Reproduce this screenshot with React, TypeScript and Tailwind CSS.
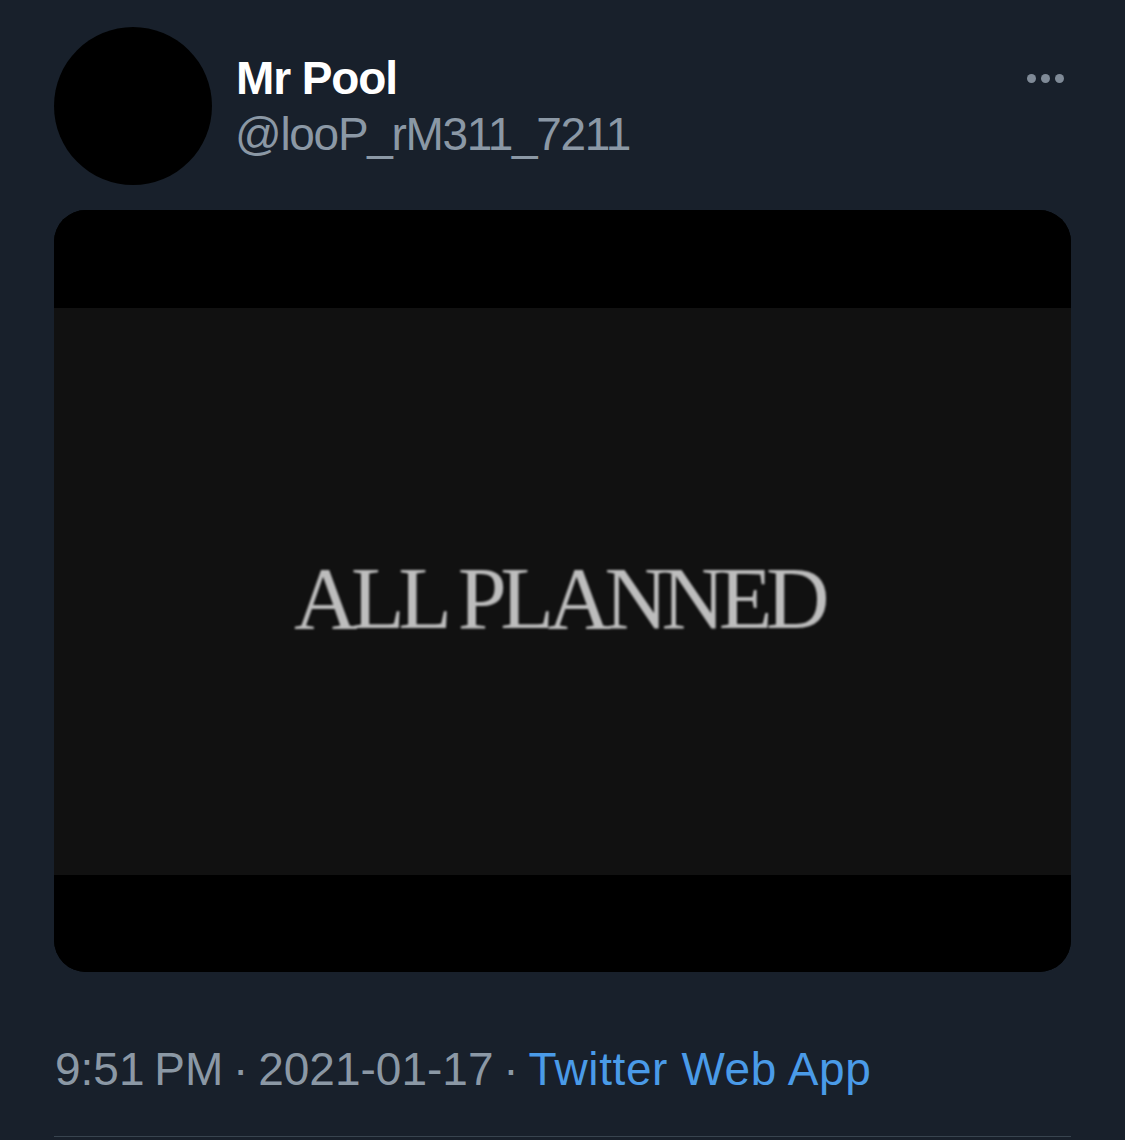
import React from 'react';

const SANS = "font-['Liberation_Sans','Helvetica',sans-serif]";

function MoreDots() {
  return (
    <div className="flex items-center gap-[5px] pt-[47px]">
      <span className="w-[9px] h-[9px] rounded-full bg-[#7f8a97]" />
      <span className="w-[9px] h-[9px] rounded-full bg-[#7f8a97]" />
      <span className="w-[9px] h-[9px] rounded-full bg-[#7f8a97]" />
    </div>
  );
}

export default function App() {
  return (
    <div className={`w-[1125px] h-[1140px] bg-[#18202b] overflow-hidden ${SANS}`}>
      <div className="pl-[54px] pr-[54px] pt-[27px]">
        {/* Header */}
        <div className="flex items-start">
          <div className="w-[158px] h-[158px] rounded-full bg-black shrink-0" />
          <div className="flex-1 pl-[24px] pt-[28px] flex flex-col">
            <div className="text-[46px] leading-[46px] font-bold text-white tracking-[-1.1px]">Mr Pool</div>
            <div className="mt-[10px] -ml-[1px] text-[46px] leading-[46px] text-[#8b98a5] tracking-[-1.3px]">@looP_rM311_7211</div>
          </div>
          <div className="pr-[7px]">
            <MoreDots />
          </div>
        </div>

        {/* Media card */}
        <div className="mt-[25px] h-[762px] rounded-[32px] overflow-hidden bg-black flex flex-col">
          <div className="h-[98px] bg-black" />
          <div className="h-[567px] bg-[#111111] flex items-center justify-center">
            <span className="pt-[14px] pr-[8px] font-['Liberation_Serif','Times_New_Roman',serif] text-[88px] leading-none text-[#bdbdbd] tracking-[-6.5px] blur-[0.8px]">
              ALL PLANNED
            </span>
          </div>
          <div className="flex-1 bg-black" />
        </div>

        {/* Footer */}
        <div className="mt-[74px] pl-[1px] text-[46px] leading-[46px] whitespace-nowrap">
          <span className="text-[#8b98a5] [word-spacing:-3px]">9:51 PM · 2021-01-17 · </span>
          <span className="text-[#4a9be8] tracking-[0.6px]">Twitter Web App</span>
        </div>
        <div className="mt-[44px] h-px bg-[#38444f]" />
      </div>
    </div>
  );
}
